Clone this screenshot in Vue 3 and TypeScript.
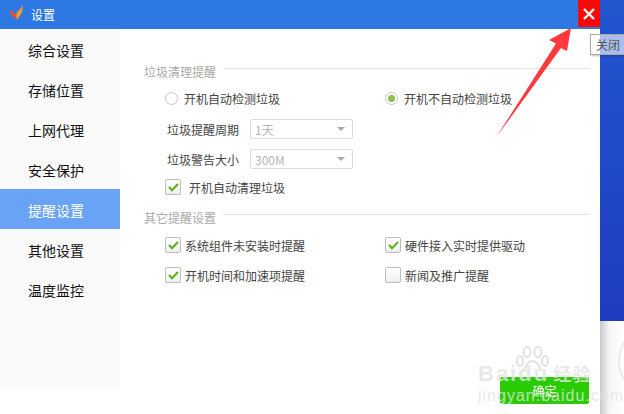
<script setup lang="ts">
const navItems = ['综合设置', '存储位置', '上网代理', '安全保护', '提醒设置', '其他设置', '温度监控']
const activeNav = '提醒设置'
const otherOptions = [
  { label: '系统组件未安装时提醒', checked: true },
  { label: '硬件接入实时提供驱动', checked: true },
  { label: '开机时间和加速项提醒', checked: true },
  { label: '新闻及推广提醒', checked: false },
]
</script>

<template>
  <div class="page">
    <div class="window">
      <header class="titlebar">
        <svg class="logo" width="15" height="15" viewBox="0 0 16 16">
          <path d="M0 6.500 Q5 6.500 7.500 10 L8.500 15.500 Q4 13 0 6.500Z" fill="#e8502a" />
          <path d="M14.500 0 Q15 4 14 7 Q13 11 8.500 15.500 Q6.500 9 10 6 Q13 4 14.500 0Z" fill="#f39a26" />
        </svg>
        <span class="title">设置</span>
        <button class="close" aria-label="关闭">
          <svg width="12" height="12" viewBox="0 0 12 12">
            <path d="M1 1 L11 11 M11 1 L1 11" stroke="#fff" stroke-width="2.4" />
          </svg>
        </button>
      </header>
      <div class="body">
        <nav class="sidebar">
          <div v-for="n in navItems" :key="n" class="nav-item" :class="{ active: n === activeNav }">{{ n }}</div>
        </nav>
        <main class="content">
          <div class="legend first"><span>垃圾清理提醒</span><i></i></div>
          <div class="radios">
            <label class="radio"><span class="dot"></span>开机自动检测垃圾</label>
            <label class="radio"><span class="dot on"></span>开机不自动检测垃圾</label>
          </div>
          <div class="field">
            <span class="field-label">垃圾提醒周期</span>
            <div class="select"><span>1天</span><b></b></div>
          </div>
          <div class="field second">
            <span class="field-label">垃圾警告大小</span>
            <div class="select"><span>300M</span><b></b></div>
          </div>
          <label class="check auto">
            <span class="box">
              <svg width="11" height="9" viewBox="0 0 11 9"><path d="M1 4 L4 7.2 L10 1" fill="none" stroke="#5fae1c" stroke-width="2" /></svg>
            </span>
            开机自动清理垃圾
          </label>
          <div class="legend"><span>其它提醒设置</span><i></i></div>
          <div class="options">
            <label v-for="o in otherOptions" :key="o.label" class="check">
              <span class="box">
                <svg v-if="o.checked" width="11" height="9" viewBox="0 0 11 9"><path d="M1 4 L4 7.2 L10 1" fill="none" stroke="#5fae1c" stroke-width="2" /></svg>
              </span>
              {{ o.label }}
            </label>
          </div>
          <button class="ok">确定</button>
        </main>
      </div>
    </div>
    <aside class="desktop">
      <div class="desk-blue"></div>
      <div class="desk-light"><div class="ring"></div></div>
    </aside>

    <div class="tooltip">关闭</div>
    <svg class="arrow" width="80" height="112" viewBox="0 0 80 112">
      <path d="M74 1 L52 13 L59 16.500 L0 109 L64 21 L70 24Z" fill="#fe3a3c" />
    </svg>
    <div class="watermark">
      <svg class="paw" width="34" height="30" viewBox="0 0 34 30">
        <g fill="none" stroke="#e2e2e2" stroke-width="2">
          <ellipse cx="5" cy="15" rx="3" ry="5" />
          <ellipse cx="12" cy="6" rx="3.500" ry="5" />
          <ellipse cx="23" cy="6" rx="3.500" ry="5" />
          <ellipse cx="30" cy="15" rx="3" ry="5" />
          <path d="M9 25 Q12 15 17 15 Q23 15 26 25" />
        </g>
      </svg>
      <div class="wm-top">Bai<span class="wm-du">du</span><span class="wm-cn">经验</span></div>
      <div class="wm-url">jingyan.baidu.com</div>
    </div>
  </div>
</template>

<style>
html, body { margin: 0; background: #fff; overflow: hidden; }
</style>

<style scoped>
.page {
  position: relative;
  display: flex;
  width: 624px;
  height: 414px;
  overflow: hidden;
  font-family: "Noto Sans CJK SC", "Liberation Sans", sans-serif;
}
.window { width: 600px; flex: none; display: flex; flex-direction: column; background: #fff; }
.titlebar {
  height: 29px;
  flex: none;
  background: #2e78e4;
  display: flex;
  align-items: center;
  padding-left: 9px;
  color: #fff;
  font-size: 12px;
}
.logo { margin-right: 7px; margin-top: -4px; }
.title { line-height: 29px; }
.close {
  margin-left: auto;
  align-self: flex-start;
  width: 22px;
  height: 27px;
  border: 0;
  padding: 0;
  background: #f50a0a;
  display: flex;
  align-items: center;
  justify-content: center;
}
.body { flex: 1; display: flex; min-height: 0; }
.sidebar { width: 120px; height: 360px; background: #fafafa; flex: none; }
.nav-item {
  height: 40px;
  padding: 2px 0 0 28px;
  box-sizing: border-box;
  line-height: 38px;
  font-size: 14px;
  color: #111;
}
.nav-item.active { background: #69a3f5; color: #fff; }
.content { position: relative; flex: 1; min-width: 0; padding: 33px 10px 0 24px; font-size: 12px; color: #444; }
.legend { display: flex; align-items: center; height: 18px; color: #aaa; }
.legend span { width: 79px; flex: none; }
.legend i { flex: 1; height: 1px; background: #e4e4e4; margin-top: -6px; }
.radios { display: grid; grid-template-columns: 220px 1fr; margin: 9px 0 0 21px; height: 18px; align-items: center; }
.radio { display: flex; align-items: center; }
.dot {
  width: 11px;
  height: 11px;
  border: 1px solid #c3c7cc;
  border-radius: 50%;
  margin-right: 6px;
  display: flex;
  align-items: center;
  justify-content: center;
  background: #fff;
}
.dot.on::after { content: ""; width: 7px; height: 7px; border-radius: 50%; background: #8cc04a; }
.field { display: flex; align-items: center; height: 20px; margin: 12px 0 0 23px; }
.field.second { margin-top: 10px; }
.field-label { width: 83px; }
.select {
  border: 1px solid #dcdcdc;
  border-radius: 2px;
  color: #b5b5b5;
  display: flex;
  align-items: center;
  justify-content: space-between;
  padding: 0 7px 0 4px;
  box-sizing: border-box;
  height: 20px;
  width: 103px;
}
.select b {
  width: 0;
  height: 0;
  border-left: 4px solid transparent;
  border-right: 4px solid transparent;
  border-top: 4px solid #a8a8a8;
}
.check { display: flex; align-items: center; height: 18px; }
.check.auto { margin: 9px 0 0 21px; }
.check.auto .box { margin-right: 8px; }
.box {
  width: 14px;
  height: 14px;
  border: 1px solid #bdbdbd;
  border-radius: 2px;
  background: linear-gradient(#fff, #eee);
  margin-right: 4px;
  display: flex;
  align-items: center;
  justify-content: center;
  flex: none;
}
.legend:not(.first) { margin-top: 12px; }
.options {
  display: grid;
  grid-template-columns: 220px 1fr;
  row-gap: 12px;
  margin: 10px 0 0 21px;
}
.ok {
  position: absolute;
  left: 380px;
  top: 348px;
  width: 89px;
  height: 27px;
  border: 0;
  border-radius: 2px;
  background: #28cc00;
  color: #fff;
  font: 12px "Noto Sans CJK SC", sans-serif;
}
.desktop { flex: 1; display: flex; flex-direction: column; }
.desk-blue { height: 321px; background: linear-gradient(#2256cf, #1f3cc0); }
.desk-light {
  flex: 1;
  position: relative;
  overflow: hidden;
  background: linear-gradient(90deg, #c9c9c9, #f6f6f6 40%, #fff);
}
.ring {
  position: absolute;
  left: 18px;
  top: 12px;
  width: 40px;
  height: 56px;
  border-radius: 50%;
  background: #fff;
  border: 2px solid #e4ecf8;
  box-sizing: border-box;
}
.ring::after {
  content: "";
  position: absolute;
  left: 4px;
  top: 12px;
  width: 30px;
  height: 30px;
  border-radius: 50%;
  background: #5b9be8;
}
.tooltip {
  position: absolute;
  left: 590px;
  top: 34px;
  width: 40px;
  height: 21px;
  box-sizing: border-box;
  padding-left: 5px;
  line-height: 19px;
  font-size: 12px;
  color: #555;
  background: rgba(255, 255, 255, 0.62);
  border: 1px solid #a9a9a9;
  box-shadow: 1px 1px 2px rgba(0, 0, 0, .25);
}
.arrow { position: absolute; left: 497px; top: 27px; }
.watermark {
  position: absolute;
  left: 478px;
  top: 346px;
  width: 120px;
  color: rgba(228, 228, 228, 0.8);
  font-family: "Liberation Sans", "Noto Sans CJK SC", sans-serif;
  pointer-events: none;
}
.paw { position: absolute; left: 37px; top: 0; }
.wm-top { font-size: 22px; font-weight: 700; line-height: 24px; margin-top: 16px; letter-spacing: 2px; white-space: nowrap; }
.wm-du { margin-right: 4px; }
.wm-cn { font-size: 18px; letter-spacing: 1px; }
.wm-url { font-size: 16px; line-height: 18px; white-space: nowrap; letter-spacing: 1px; }
</style>
